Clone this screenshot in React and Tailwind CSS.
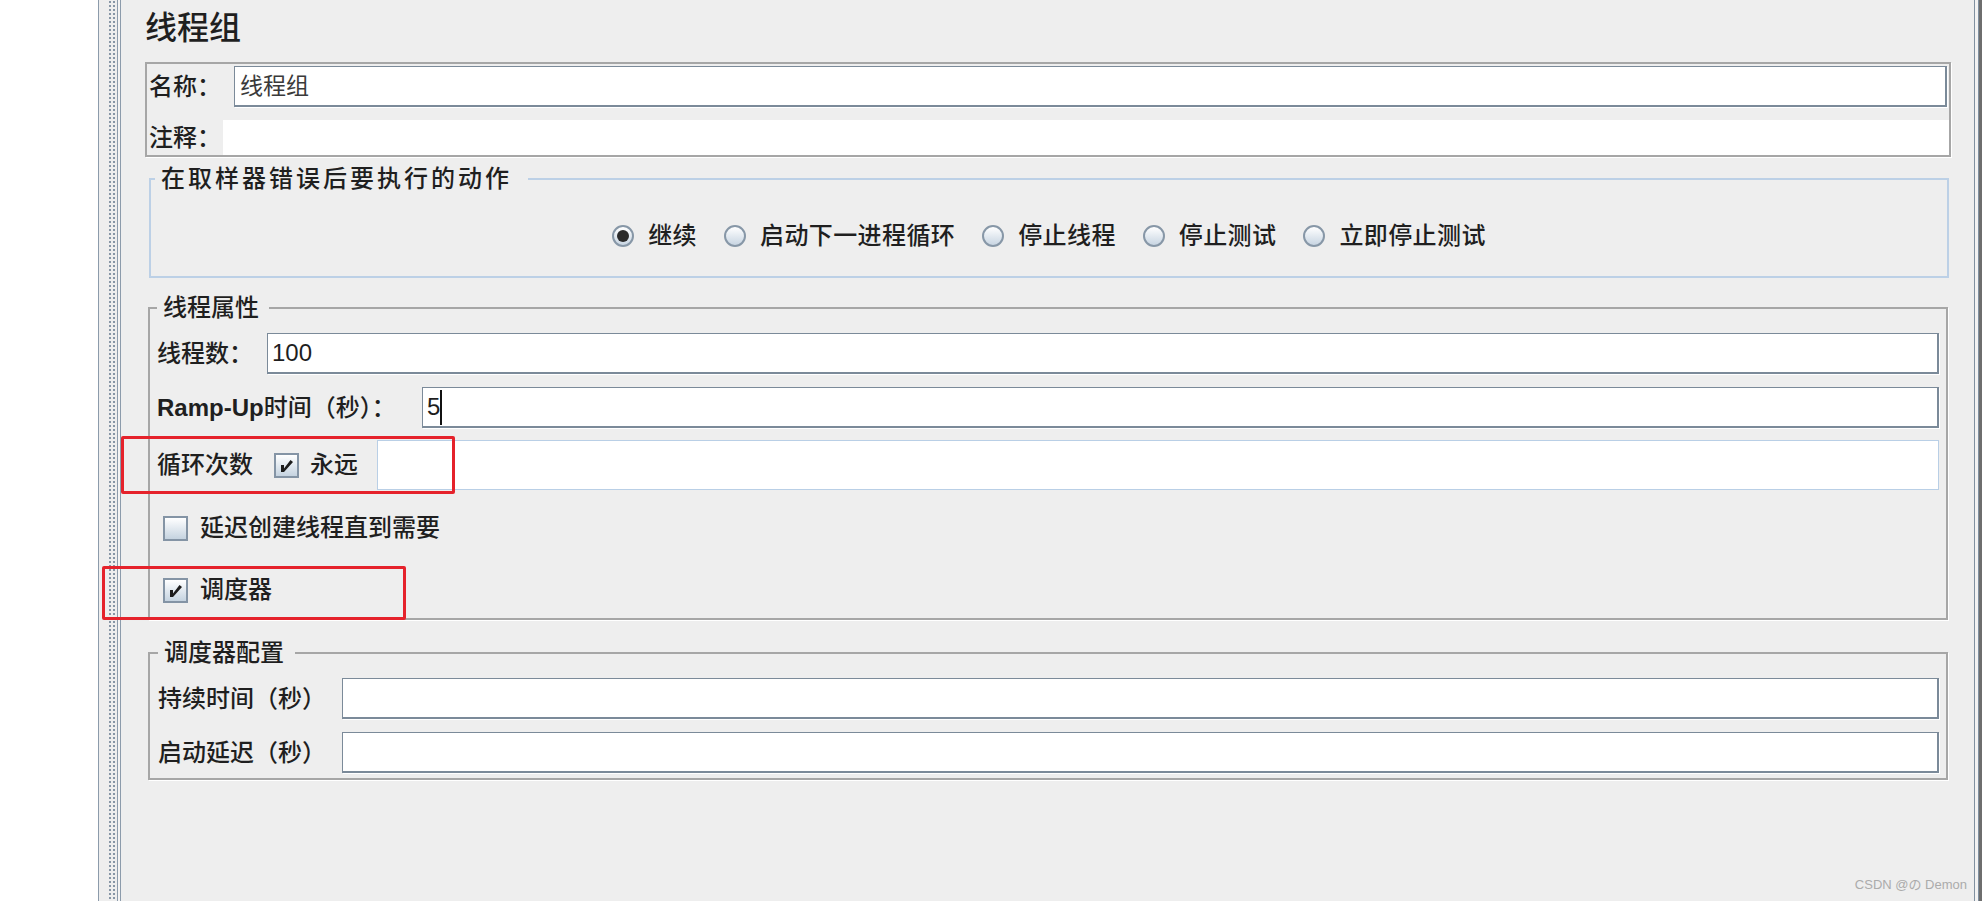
import React from "react";

const FONT = "font-['Liberation_Sans','Noto_Sans_CJK_SC',sans-serif]";

// text field in the JMeter look: thin top/left edge, heavier bottom/right edge
const Field = ({ value, caret, className = "" }) => (
  <div
    className={`flex-1 h-[41px] flex items-center bg-white border-t border-l border-r-2 border-b-2 border-[#7b8a99] shadow-[1px_1px_0_#ffffff] pl-[4px] text-[24px] font-normal text-[#1e1e1e] ${className}`}
  >
    {value}
    {caret && <span className="inline-block w-[2px] h-[35px] bg-[#111111]" />}
  </div>
);

const Radio = ({ label, checked }) => (
  <label className="flex items-center gap-[14px]">
    <span className="w-[22px] h-[22px] rounded-full border-2 border-[#8797a7] bg-linear-to-b from-white to-[#c8d5e2] flex items-center justify-center">
      {checked && <span className="w-[12px] h-[12px] rounded-full bg-[#2a2a2a]" />}
    </span>
    <span className="text-[24px] leading-[28px] tracking-[0.4px] text-[#1f1f1f]">{label}</span>
  </label>
);

const Check = ({ checked }) => (
  <span className="w-[25px] h-[25px] shrink-0 border-2 border-[#8494a5] bg-linear-to-b from-white to-[#c5d3e0] flex items-center justify-center">
    {checked && (
      <svg width="17" height="17" viewBox="0 0 17 17">
        <path d="M3 8h3v3.5L12.5 3 15 5 6 15H3z" fill="#1c1c1c" />
      </svg>
    )}
  </span>
);

const actions = [
  { label: "继续", checked: true },
  { label: "启动下一进程循环" },
  { label: "停止线程" },
  { label: "停止测试" },
  { label: "立即停止测试" },
];

export default function App() {
  return (
    <div className={`relative w-full h-[901px] flex overflow-hidden bg-white ${FONT}`}>
      {/* left blank area + splitter */}
      <div className="w-[98px] bg-white" />
      <div className="flex h-full">
        <div className="w-px bg-[#8c9bab]" />
        <div className="w-[9px] bg-[#eeeeee]" />
        <div className="w-[9px] bg-[#eeeeee] bg-[radial-gradient(circle,#8796a6_1px,transparent_1.3px)] bg-[length:4px_4px]" />
        <div className="w-px bg-[#8c9bab]" />
        <div className="w-[2px] bg-[#f4f4f4]" />
        <div className="w-px bg-[#8c9bab]" />
        <div className="w-[2px] bg-[#eeeeee]" />
      </div>

      <main className="flex-1 flex flex-col bg-[#eeeeee] pl-[22px] pr-[23px] text-[#1f1f1f] font-medium">
        <h1 className="h-[62px] pt-[8px] text-[32px] leading-[40px] font-medium">线程组</h1>

        {/* name / comment */}
        <div className="h-[95px] border-2 border-[#a6a6a6] shadow-[1px_1px_0_#ffffff] flex flex-col">
          <div className="h-[46px] flex items-start pt-[2px] px-[2px]">
            <span className="w-[85px] h-[41px] flex items-center text-[24px]">名称：</span>
            <Field value={<span className="text-[23px] text-[#3a3a3a]">线程组</span>} className="pl-[5px]" />
          </div>
          <div className="mt-[10px] h-[35px] flex">
            <span className="w-[76px] pl-[2px] flex items-center text-[24px]">注释：</span>
            <div className="flex-1 bg-white" />
          </div>
        </div>

        {/* sampler error action */}
        <fieldset className="mt-[8px] ml-[4px] mr-[2px] border-2 border-[#bcd0e6] pb-[26px]">
          <legend className="ml-[4px] pl-[6px] pr-[16px] text-[24px] leading-[28px] tracking-[3px]">
            在取样器错误后要执行的动作
          </legend>
          <div className="pt-[29px] flex justify-center gap-[27px]">
            {actions.map((a) => (
              <Radio key={a.label} label={a.label} checked={a.checked} />
            ))}
          </div>
        </fieldset>

        {/* thread properties */}
        <fieldset className="mt-[16px] mx-[3px] border-2 border-[#a6a6a6] shadow-[1px_1px_0_#ffffff] pt-[11px] pb-[3px] pl-[7px] pr-[7px]">
          <legend className="pl-[6px] pr-[10px] text-[24px] leading-[28px]">线程属性</legend>
          <div className="h-[41px] flex items-center">
            <span className="w-[110px] text-[24px]">线程数：</span>
            <Field value="100" />
          </div>
          <div className="mt-[13px] h-[41px] flex items-center">
            <span className="w-[265px] text-[24px]">
              <b className="font-bold">Ramp-Up</b>时间（秒）：
            </span>
            <Field value="5" caret />
          </div>
          <div className="mt-[12px] h-[50px] flex items-center">
            <span className="w-[117px] text-[24px]">循环次数</span>
            <Check checked />
            <span className="ml-[11px] w-[67px] text-[24px]">永远</span>
            <div className="flex-1 h-full bg-white border border-[#b9cfe6]" />
          </div>
          <div className="mt-[13px] h-[50px] flex items-center gap-[12px] pl-[6px]">
            <Check />
            <span className="text-[24px]">延迟创建线程直到需要</span>
          </div>
          <div className="mt-[12px] h-[50px] flex items-center gap-[12px] pl-[6px]">
            <Check checked />
            <span className="text-[24px]">调度器</span>
          </div>
        </fieldset>

        {/* scheduler config */}
        <fieldset className="mt-[19px] mx-[3px] border-2 border-[#a6a6a6] shadow-[1px_1px_0_#ffffff] pt-[11px] pb-[5px] pl-[8px] pr-[7px]">
          <legend className="pl-[6px] pr-[11px] text-[24px] leading-[28px]">调度器配置</legend>
          <div className="h-[41px] flex items-center">
            <span className="w-[184px] text-[24px]">持续时间（秒）</span>
            <Field value="" />
          </div>
          <div className="mt-[13px] h-[41px] flex items-center">
            <span className="w-[184px] text-[24px]">启动延迟（秒）</span>
            <Field value="" />
          </div>
        </fieldset>
      </main>

      {/* right edge */}
      <div className="flex h-full">
        <div className="w-px bg-[#8090a0]" />
        <div className="w-[3px] bg-[#f2f2f2]" />
        <div className="w-px bg-[#8090a0]" />
        <div className="w-[3px] bg-[#6e6e6e]" />
      </div>

      {/* red annotation boxes */}
      <div className="absolute left-[121px] top-[436px] w-[334px] h-[58px] border-[3px] border-[#e5222b] rounded-[2px]" />
      <div className="absolute left-[102px] top-[566px] w-[304px] h-[54px] border-[3px] border-[#e5222b] rounded-[2px]" />

      <span className="absolute right-[15px] top-[877px] text-[13px] leading-[16px] font-normal text-[#ababab]">
        CSDN @の Demon
      </span>
    </div>
  );
}
